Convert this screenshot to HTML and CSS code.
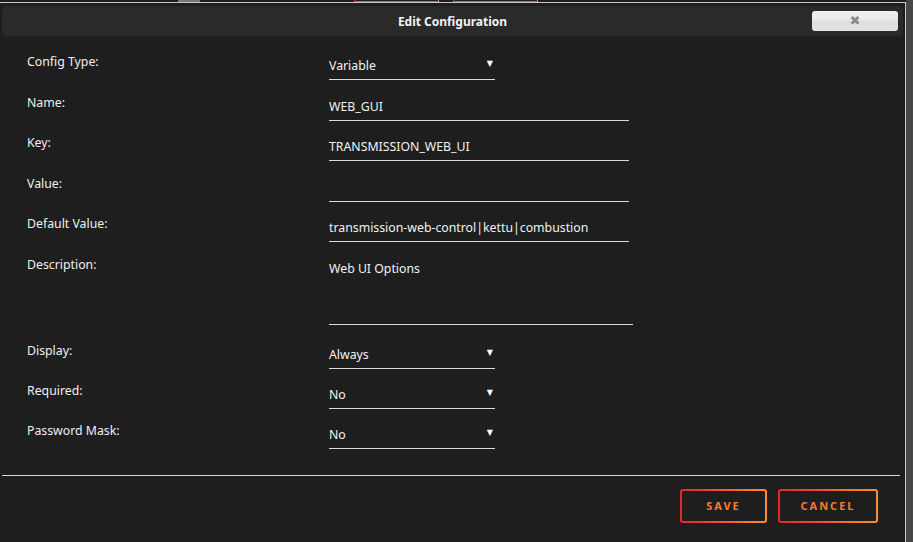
FILE: index.html
```html
<!DOCTYPE html>
<html lang="en">
<head>
    <meta charset="UTF-8">
    <title>Edit Configuration</title>
    <link rel="stylesheet" href="styles.css">
</head>
<body>
    <div class="page">
        <div class="backdrop">
            <span class="peek peek-gray"></span>
            <span class="peek peek-red"></span>
            <span class="peek peek-orange"></span>
            <span class="peek peek-red"></span>
            <span class="peek peek-orange"></span>
        </div>
        <div class="dialog">
            <div class="titlebar">
                <span class="title">Edit Configuration</span>
                <button class="close" type="button">&#x2716;</button>
            </div>

            <form class="config-form">
                <div class="row">
                    <label>Config Type:</label>
                    <div class="field select short">Variable<span class="caret">&#9660;</span></div>
                </div>
                <div class="row">
                    <label>Name:</label>
                    <div class="field">WEB_GUI</div>
                </div>
                <div class="row">
                    <label>Key:</label>
                    <div class="field">TRANSMISSION_WEB_UI</div>
                </div>
                <div class="row">
                    <label>Value:</label>
                    <div class="field"></div>
                </div>
                <div class="row">
                    <label>Default Value:</label>
                    <div class="field">transmission-web-control|kettu|combustion</div>
                </div>
                <div class="row row-tall">
                    <label>Description:</label>
                    <div class="field textarea">Web UI Options</div>
                </div>
                <div class="row row-compact">
                    <label>Display:</label>
                    <div class="field select short">Always<span class="caret">&#9660;</span></div>
                </div>
                <div class="row row-compact">
                    <label>Required:</label>
                    <div class="field select short">No<span class="caret">&#9660;</span></div>
                </div>
                <div class="row row-compact">
                    <label>Password Mask:</label>
                    <div class="field select short">No<span class="caret">&#9660;</span></div>
                </div>
            </form>

            <div class="actions">
                <button class="btn save" type="button">Save</button>
                <button class="btn cancel" type="button">Cancel</button>
            </div>
        </div>
    </div>
</body>
</html>
```

FILE: styles.css
```css
* {
    box-sizing: border-box;
    margin: 0;
    padding: 0;
}

body {
    font-family: 'Noto Sans', 'Open Sans', sans-serif;
    background: #474747;
    color: #f2f2f2;
}

.page {
    width: 913px;
    height: 542px;
    overflow: hidden;
    background: #474747;
}

.backdrop {
    height: 2px;
    width: 906px;
    background: #1e1e1e;
    display: flex;
    overflow: hidden;
}

.peek {
    height: 2px;
}

.peek-gray {
    width: 22px;
    margin-left: 178px;
    margin-right: 154px;
    background: #777;
}

.peek-red {
    width: 1px;
    background: #e22d2d;
}

.peek-orange {
    width: 84px;
    border-right: 1px solid #f08a3c;
    background: linear-gradient(#1e1e1e 50%, #c96a28 50%);
    margin-right: 14px;
}

.dialog {
    width: 906px;
    height: 540px;
    background: #1e1e1e;
    border-top: 1px solid #c9c9c9;
    border-right: 1px solid #c9c9c9;
    display: flex;
    flex-direction: column;
}

.titlebar {
    margin: 3px 2px 0 2px;
    height: 30px;
    background: #2a2a2a;
    border-radius: 5px;
    display: flex;
    align-items: center;
    justify-content: center;
    position: relative;
}

.title {
    font-size: 12px;
    font-weight: 700;
    color: #f4f4f4;
}

.close {
    position: absolute;
    right: 5px;
    top: 5px;
    width: 86px;
    height: 20px;
    border: none;
    border-radius: 3px;
    background: linear-gradient(#f2f2f2, #e6e6e6 50%, #dedede 50%, #e4e4e4);
    color: #8a8a8a;
    font-size: 13px;
    font-family: 'DejaVu Sans', sans-serif;
    line-height: 20px;
}

.config-form {
    padding: 17px 0 0 27px;
}

.row {
    display: grid;
    grid-template-columns: 302px 1fr;
    height: 40.5px;
    font-size: 12.3px;
    line-height: 16px;
}

.row-tall {
    height: 86.5px;
}

.row-compact {
    height: 40px;
}

label {
    padding-top: 1px;
    color: #f0f0f0;
}

.field {
    width: 300px;
    height: 27px;
    padding-top: 5px;
    border-bottom: 1px solid #dcdcdc;
    color: #f2f2f2;
    white-space: nowrap;
}

.field.short {
    width: 166px;
}

.field.select {
    display: flex;
    justify-content: space-between;
    padding-right: 2px;
}

.caret {
    font-size: 8px;
    line-height: 12px;
    color: #fff;
    font-family: 'DejaVu Sans', sans-serif;
}

.field.textarea {
    width: 304px;
    height: 69.5px;
}

.actions {
    margin: 13px 5px 0 2px;
    border-top: 1px solid #d8d8d8;
    padding: 13px 22px 0 0;
    display: flex;
    justify-content: flex-end;
    gap: 11px;
}

.btn {
    height: 34px;
    border: 2px solid transparent;
    border-radius: 3px;
    background:
        linear-gradient(#1e1e1e, #1e1e1e) padding-box,
        linear-gradient(90deg, #e22828, #ff8c2f) border-box;
    color: #ff7a2e;
    font-family: 'Noto Sans', sans-serif;
    font-size: 11px;
    font-weight: 700;
    letter-spacing: 2px;
    text-transform: uppercase;
    padding-bottom: 1px;
}

.save {
    width: 87px;
}

.cancel {
    width: 100px;
}
```
